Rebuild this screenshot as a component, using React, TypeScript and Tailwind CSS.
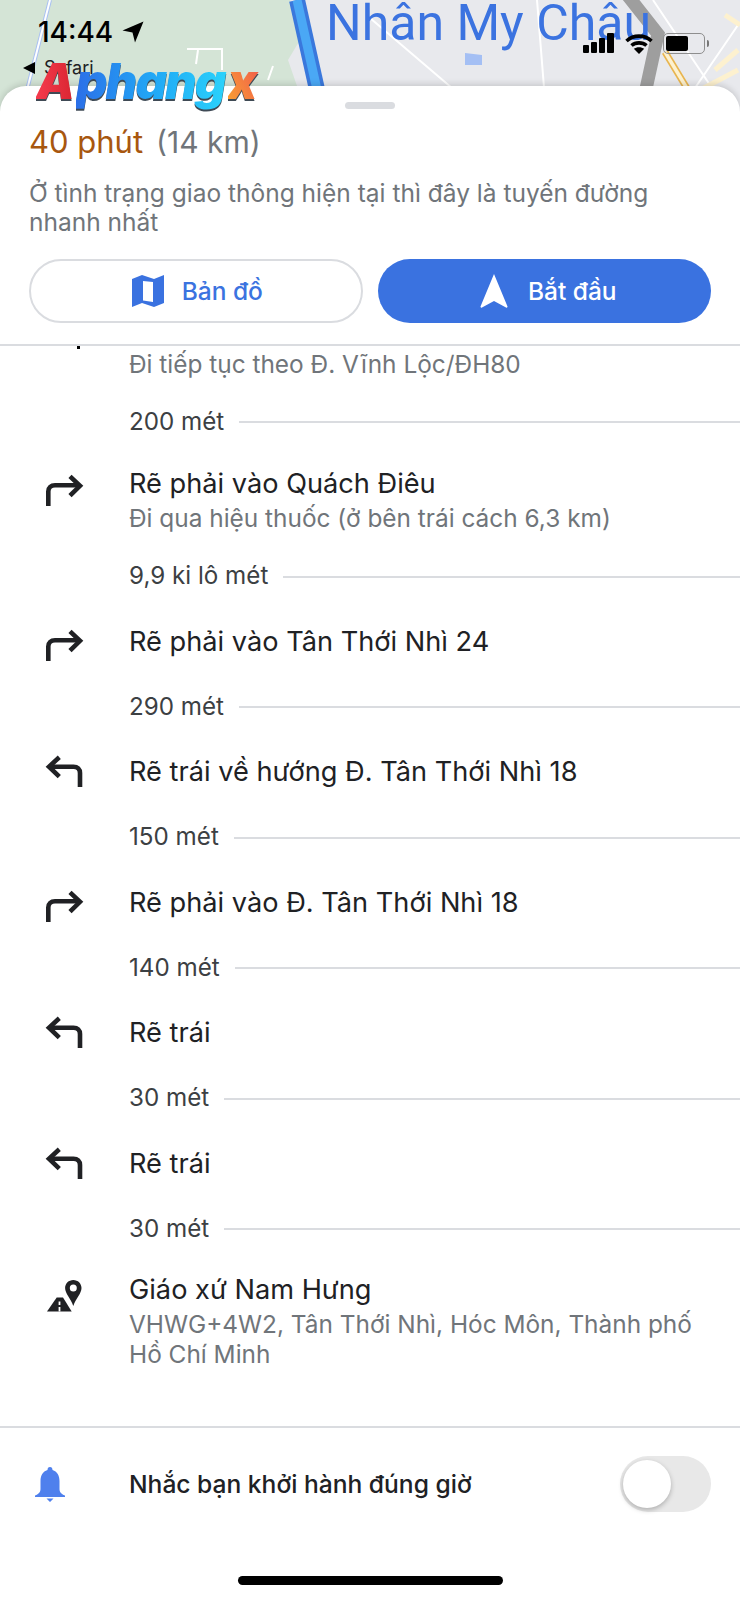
import React from "react"

const TurnRight = () => (
  <svg width="40" height="40" viewBox="0 0 40 40" fill="none" stroke="#202124" strokeWidth="4.6">
    <path d="M4.3 39V24.5C4.3 20.5 7 18.3 11 18.3H36" />
    <path d="M26 9.3L36 18.8L26 28.7" />
  </svg>
)

const TurnLeft = () => (
  <svg width="40" height="40" viewBox="0 0 40 40" fill="none" stroke="#202124" strokeWidth="4.6">
    <path d="M36 35V21C36 17 33.5 14.7 29.5 14.7H5" />
    <path d="M15.3 5.3L5 14.7L15.3 24.7" />
  </svg>
)

const Destination = () => (
  <svg width="40" height="40" viewBox="0 0 40 40">
    <path fill="#202124" fillRule="evenodd" d="M29.3 7c-4.6 0-8.2 3.6-8.2 8 0 5.600 5.700 10.500 8.200 18 2.500-7.500 8.200-12.400 8.200-18 0-4.400-3.600-8-8.200-8zm0 4.500a3.500 3.500 0 1 1 0 7 3.500 3.500 0 0 1 0-7z" />
    <path fill="#202124" d="M3 38.500L12.700 24.500H19L27.700 38.500Z" />
    <path stroke="#fff" strokeWidth="1.800" d="M15.500 28.500V32M15.500 34V38.500" />
  </svg>
)

const Step = ({ icon, title }: { icon: React.ReactNode; title: string }) => (
  <div className="flex h-[86.5px] items-center">
    <div className="ml-[44px] w-[85px]">{icon}</div>
    <div className="text-[27.2px] leading-[34px] text-[#202124]">{title}</div>
  </div>
)

const Distance = ({ label }: { label: string }) => (
  <div className="flex h-[44px] items-center gap-[15px] pl-[129px]">
    <span className="text-[24.2px] text-[#3c4043]">{label}</span>
    <div className="h-[2px] flex-1 bg-[#dadce0]" />
  </div>
)

const MapStrip = () => (
  <div className="relative h-[112px] overflow-hidden bg-[#e8e9ed]">
    <svg className="h-full w-full" viewBox="0 0 740 112" fill="none">
      <path fill="#d4e4d6" d="M0 0H290L300 40L288 60L306 112H0Z" />
      <path stroke="#fff" strokeWidth="2" d="M187 49H222V70M198 50L196 64M273 66L268 80" />
      <path stroke="#a9c0f2" strokeWidth="4" d="M50 0L27 90" />
      <path stroke="#fff" strokeWidth="2" d="M50 0L27 90" />
      <path stroke="#3a78dc" strokeWidth="16" d="M297 0L322 112" />
      <path stroke="#4aa8f5" strokeWidth="9" d="M297 0L322 112" />
      <path stroke="#fff" strokeWidth="2" d="M370 18L466 100M537 0L545 100M653 0L720 100M738 25L680 110" />
      <path stroke="#9e9e9e" strokeWidth="13" d="M628 -4L658 34L641 112" />
      <path stroke="#e8b54f" strokeWidth="7" d="M665 52L694 100" />
      <path stroke="#fdf1cf" strokeWidth="3.500" d="M665 52L694 100" />
      <path stroke="#fdf1cf" strokeWidth="5" d="M715 70L738 50M725 15L740 25M700 90L738 70" />
      <path fill="#a4bff4" d="M465 53L482 55V65H465Z" />
    </svg>
    <div className="absolute left-[326px] top-[-7px] text-[50px] leading-[60px] text-[#3b73e0] [font-family:Roboto,sans-serif]">
      Nhân My Châu
    </div>
    <div className="absolute left-[38px] top-[16px] text-[28px] font-medium leading-[32px] text-black">14:44</div>
    <svg className="absolute left-[122px] top-[21px]" width="22" height="22" viewBox="0 0 22 22">
      <path d="M21.500 0.500L0.500 9.500L10.500 11.500L13 21.500Z" fill="#000" />
    </svg>
    <div className="absolute left-[23px] top-[58px] flex items-center gap-[9px] text-[18px] leading-[20px] text-[#202124]">
      <span className="h-0 w-0 border-y-[6px] border-r-[12px] border-y-transparent border-r-black" />
      Safari
    </div>
    <div className="absolute left-[583px] top-[33px] flex items-end gap-[2px]">
      <div className="h-[8px] w-[6px] rounded-[1px] bg-black" />
      <div className="h-[11px] w-[6px] rounded-[1px] bg-black" />
      <div className="h-[15px] w-[6px] rounded-[1px] bg-black" />
      <div className="h-[20px] w-[7px] rounded-[1px] bg-black" />
    </div>
    <svg className="absolute left-[625px] top-[34px]" width="28" height="20" viewBox="0 0 28 20" fill="none" stroke="#000" strokeWidth="3.600">
      <path d="M1.500 7C8.500 0.500 19.500 0.500 26.500 7" />
      <path d="M6.500 11.500C10.500 8 17.500 8 21.500 11.500" />
      <path d="M14 20L8.800 14.800C11.500 12.600 16.500 12.600 19.200 14.800Z" fill="#000" stroke="none" />
    </svg>
    <div className="absolute left-[663px] top-[33px] flex h-[21px] w-[42px] items-center rounded-[5px] border-[1.5px] border-[#8e8e8e] px-[2px]">
      <div className="h-[15px] w-[22px] rounded-[2px] bg-black" />
    </div>
    <div className="absolute left-[707px] top-[40px] h-[7px] w-[2px] rounded-r-full bg-[#777]" />
  </div>
)

const Logo = () => (
  <div className="absolute left-[36px] top-[52px] flex text-[49px] font-black italic leading-[60px] tracking-[-2px] [font-family:Inter,sans-serif] drop-shadow-[0_2px_0_#3f4a55]">
    <span className="bg-linear-to-r from-[#f53b4d] to-[#d8232f] bg-clip-text pr-[3px] text-transparent">A</span>
    <span className="bg-linear-to-r from-[#2b6fe8] via-[#22a7f5] to-[#2bd3fb] bg-clip-text pr-[3px] text-transparent">phang</span>
    <span className="bg-linear-to-tr from-[#f9a52c] to-[#ee4d4a] bg-clip-text pr-[4px] text-transparent">x</span>
  </div>
)

export default function App() {
  return (
    <div className="relative h-[1600px] w-[740px] overflow-hidden bg-white [font-family:Inter,sans-serif]">
      <MapStrip />

      <div className="relative mt-[-26px] h-[1514px] rounded-t-[26px] bg-white shadow-[0_-2px_6px_rgba(0,0,0,0.14)]">
        <div className="border-b-2 border-[#dadce0]">
          <div className="flex justify-center pt-[16px]">
            <div className="h-[7px] w-[50px] rounded-full bg-[#dadce0]" />
          </div>
          <div className="mt-[15px] flex items-center gap-[13px] pl-[29px] leading-[36px]">
            <span className="text-[31px] text-[#a8570f]">40 phút</span>
            <span className="text-[30px] text-[#70757a]">(14 km)</span>
          </div>
          <div className="mt-[19px] px-[29px] text-[24.5px] leading-[29px] text-[#70757a]">
            Ở tình trạng giao thông hiện tại thì đây là tuyến đường nhanh nhất
          </div>
          <div className="mt-[22px] grid grid-cols-2 gap-[15px] px-[29px] pb-[21px]">
            <button className="flex h-[64px] items-center justify-center gap-[18px] rounded-full border-2 border-[#dadce0] bg-white pl-[3px] text-[24.5px] font-medium text-[#3b73e0]">
              <svg width="32" height="32" viewBox="0 0 32 32">
                <path fill="#3a72e0" fillRule="evenodd" d="M0 4L10 0L22 4L32 0V28L22 32L10 28L0 32ZM11 6V25.500L21 27V7Z" />
              </svg>
              Bản đồ
            </button>
            <button className="flex h-[64px] items-center justify-center gap-[20px] rounded-full bg-[#3a72e0] pl-[8px] text-[24.5px] font-medium text-white">
              <svg width="28" height="34" viewBox="0 0 28 34">
                <path fill="#fff" d="M14 0L27.500 32.500C27.500 33.500 27 34 26 33.500L14 27L2 33.500C1 34 0.500 33.500 0.500 32.500Z" />
              </svg>
              Bắt đầu
            </button>
          </div>
        </div>

        <div className="relative h-[54px]">
          <div className="absolute left-[77px] top-0 h-[3px] w-[3px] bg-black" />
          <div className="pl-[129px] pt-[3px] text-[24.4px] leading-[30px] text-[#70757a]">
            Đi tiếp tục theo Đ. Vĩnh Lộc/ĐH80
          </div>
        </div>

        <Distance label="200 mét" />
        <div className="flex h-[110.5px] pt-[22.5px]">
          <div className="ml-[44px] w-[85px]">
            <TurnRight />
          </div>
          <div>
            <div className="text-[27.2px] leading-[34px] text-[#202124]">Rẽ phải vào Quách Điêu</div>
            <div className="mt-[2px] text-[24.4px] leading-[30px] text-[#70757a]">
              Đi qua hiệu thuốc (ở bên trái cách 6,3 km)
            </div>
          </div>
        </div>
        <Distance label="9,9 ki lô mét" />
        <Step icon={<TurnRight />} title="Rẽ phải vào Tân Thới Nhì 24" />
        <Distance label="290 mét" />
        <Step icon={<TurnLeft />} title="Rẽ trái về hướng Đ. Tân Thới Nhì 18" />
        <Distance label="150 mét" />
        <Step icon={<TurnRight />} title="Rẽ phải vào Đ. Tân Thới Nhì 18" />
        <Distance label="140 mét" />
        <Step icon={<TurnLeft />} title="Rẽ trái" />
        <Distance label="30 mét" />
        <Step icon={<TurnLeft />} title="Rẽ trái" />
        <Distance label="30 mét" />

        <div className="flex h-[177px] border-b-2 border-[#dadce0] pt-[22px]">
          <div className="ml-[44px] w-[85px] shrink-0">
            <Destination />
          </div>
          <div className="pr-[40px]">
            <div className="text-[27.2px] leading-[34px] text-[#202124]">Giáo xứ Nam Hưng</div>
            <div className="mt-[2px] text-[24.4px] leading-[30px] text-[#70757a]">
              VHWG+4W2, Tân Thới Nhì, Hóc Môn, Thành phố Hồ Chí Minh
            </div>
          </div>
        </div>

        <div className="flex h-[112px] items-center pr-[29px]">
          <div className="flex w-[129px] justify-start pl-[35px]">
            <svg width="30" height="35" viewBox="0 0 30 35">
              <path fill="#4f80ed" d="M15 0c1.700 0 2.500 1.200 2.500 3 4.700 1.500 7 5.500 7 11v8c0 3 1.500 5 5.500 6.500V30H0v-1.500C4 27 5.500 25 5.500 22v-8c0-5.500 2.300-9.500 7-11C12.500 1.200 13.300 0 15 0zM11.500 31.500h7L15 35z" />
            </svg>
          </div>
          <div className="flex-1 text-[24.6px] font-medium text-[#202124]">Nhắc bạn khởi hành đúng giờ</div>
          <div className="flex h-[56px] w-[91px] items-center rounded-full bg-[#e8e8e8] pl-[3px]">
            <div className="h-[48px] w-[48px] rounded-full bg-white shadow-[0_2px_5px_rgba(0,0,0,0.25)]" />
          </div>
        </div>

        <div className="flex justify-center pt-[36px]">
          <div className="h-[9px] w-[265px] rounded-full bg-black" />
        </div>
      </div>

      <Logo />
    </div>
  )
}
